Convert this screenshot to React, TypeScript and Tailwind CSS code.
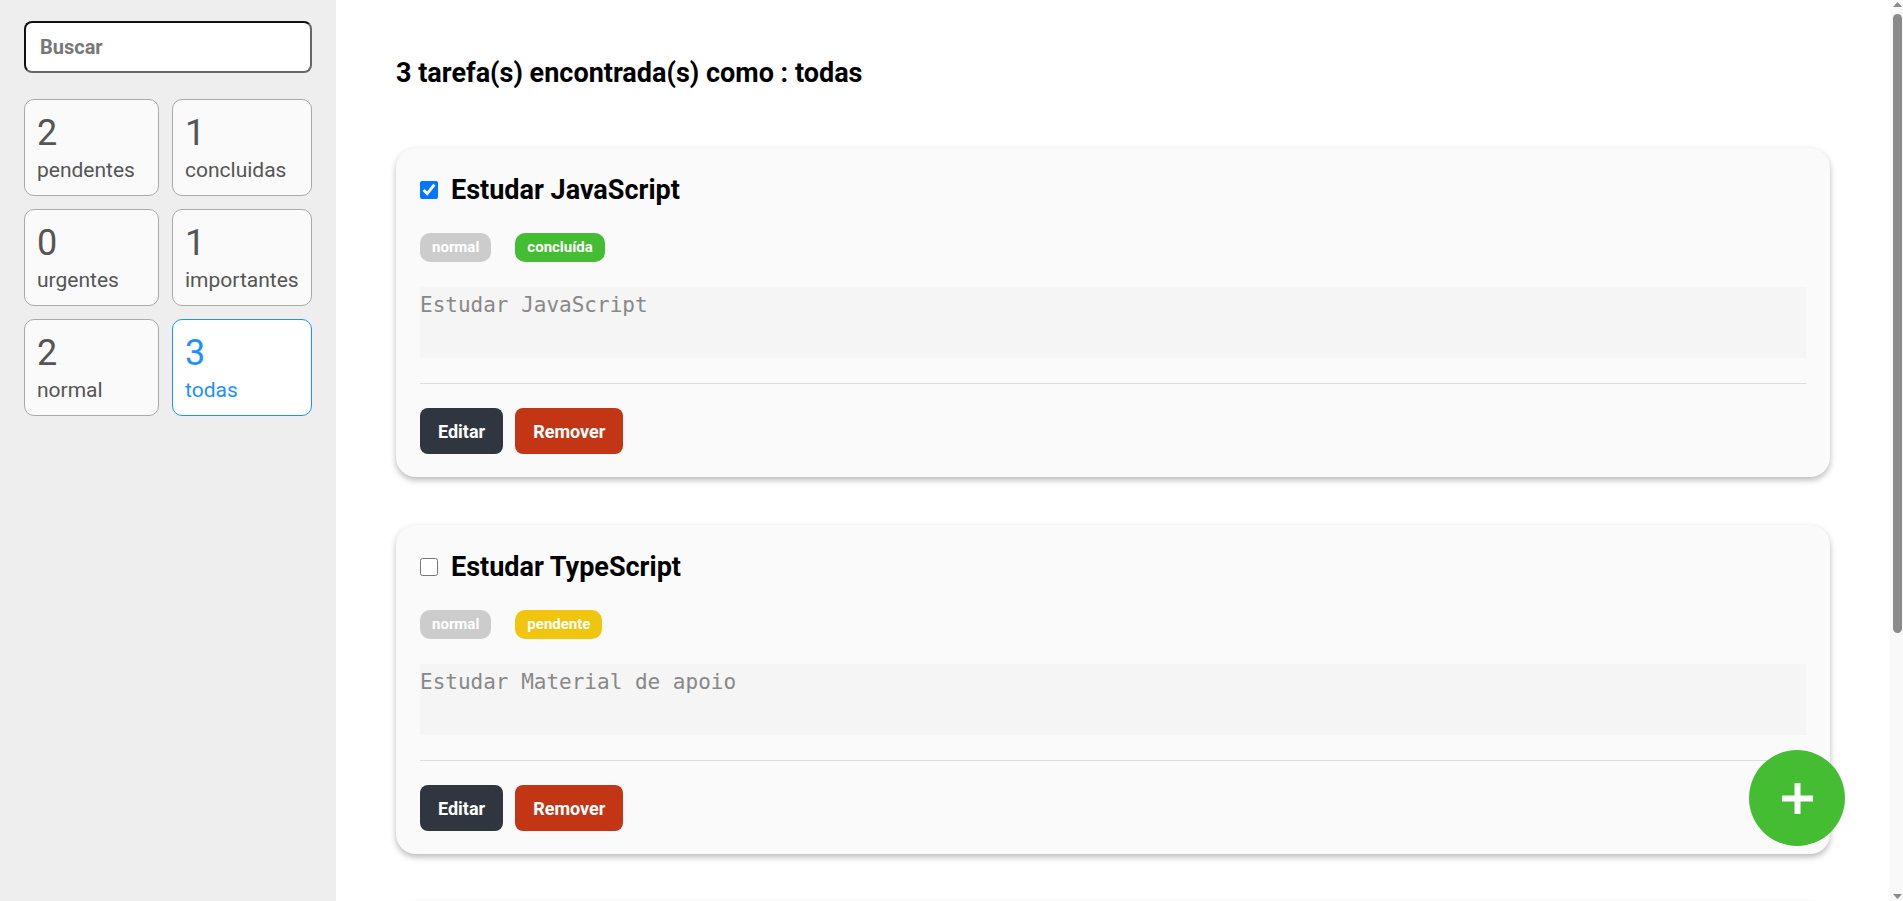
import React from "react";

type Task = {
  title: string;
  desc: string;
  done: boolean;
  priority: string;
  priorityClass: string;
};

const tasks: Task[] = [
  { title: "Estudar JavaScript", desc: "Estudar JavaScript", done: true, priority: "normal", priorityClass: "bg-[#cccccc]" },
  { title: "Estudar TypeScript", desc: "Estudar Material de apoio", done: false, priority: "normal", priorityClass: "bg-[#cccccc]" },
  { title: "Estudar React", desc: "Estudar componentes e hooks", done: false, priority: "importante", priorityClass: "bg-[#e1b12c]" },
];

const stats = [
  { n: "2", label: "pendentes", active: false },
  { n: "1", label: "concluidas", active: false },
  { n: "0", label: "urgentes", active: false },
  { n: "1", label: "importantes", active: false },
  { n: "2", label: "normal", active: false },
  { n: "3", label: "todas", active: true },
];

function StatCard({ n, label, active }: { n: string; label: string; active: boolean }) {
  return (
    <div
      className={
        active
          ? "rounded-[10px] border border-[#1e90ff] bg-white pt-[13px] pb-[13px] px-[12px] text-[#1e90ff]"
          : "rounded-[10px] border border-[#aaaaaa] bg-[#fafafa] pt-[13px] pb-[13px] px-[12px] text-[#555555]"
      }
    >
      <div className="text-[36px] leading-[40px]">{n}</div>
      <div className="mt-[5px] text-[21px] leading-[24px]">{label}</div>
    </div>
  );
}

function TaskCard({ t }: { t: Task }) {
  return (
    <div className="rounded-[20px] bg-[#fafafa] pt-[27px] pb-[23px] px-[24px] shadow-[0_3px_6px_rgba(0,0,0,0.28)]">
      <div className="flex h-[30px] items-center">
        <input
          type="checkbox"
          defaultChecked={t.done}
          className="m-0 h-[18px] w-[18px] shrink-0"
        />
        <h3 className="ml-[13px] text-[27px] font-bold leading-[30px] text-black">{t.title}</h3>
      </div>
      <div className="mt-[28px] flex gap-[24px]">
        <span className={`flex h-[29px] items-center rounded-[10px] px-[12px] text-[15px] font-bold text-white ${t.priorityClass}`}>
          {t.priority}
        </span>
        <span
          className={
            t.done
              ? "flex h-[29px] items-center rounded-[10px] px-[12px] text-[15px] font-bold text-white bg-[#44bd32]"
              : "flex h-[29px] items-center rounded-[10px] px-[12px] text-[15px] font-bold text-white bg-[#f1c40f]"
          }
        >
          {t.done ? "concluída" : "pendente"}
        </span>
      </div>
      <div className="mt-[25px] h-[71px] bg-[#f5f5f5] pt-[6px] font-['DejaVu_Sans_Mono',monospace] text-[21px] leading-[24px] text-[#888888]">
        {t.desc}
      </div>
      <div className="mt-[25px] h-px bg-[#dddddd]" />
      <div className="mt-[24px] flex gap-[12px]">
        <button className="h-[46px] rounded-[8px] bg-[#2f3640] px-[18px] text-[18px] font-bold text-white">Editar</button>
        <button className="h-[46px] rounded-[8px] bg-[#c23616] px-[18px] text-[18px] font-bold text-white">Remover</button>
      </div>
    </div>
  );
}

function Scrollbar() {
  return (
    <div className="flex w-[13px] shrink-0 flex-col bg-[#f9f9f9]">
      <div className="flex h-[14px] items-start justify-end pr-[1px] pt-[2px]">
        <svg width="9" height="5" viewBox="0 0 9 5">
          <polygon points="4.5,0 9,5 0,5" fill="#8a8a8a" />
        </svg>
      </div>
      <div className="ml-[3px] h-[619px] w-[9px] rounded-full bg-[#8a8a8a]" />
      <div className="flex-1" />
      <div className="flex h-[14px] items-end justify-end pr-[1px] pb-[2px]">
        <svg width="9" height="5" viewBox="0 0 9 5">
          <polygon points="0,0 9,0 4.5,5" fill="#8a8a8a" />
        </svg>
      </div>
    </div>
  );
}

export default function App() {
  return (
    <div className="flex h-screen overflow-hidden font-['Roboto',sans-serif]">
      <div className="min-w-0 flex-1 overflow-hidden">
        <div className="flex min-h-full">
          <aside className="w-[336px] shrink-0 bg-[#eeeeee] px-[24px] pt-[21px]">
            <input
              placeholder="Buscar"
              className="block h-[52px] w-full rounded-[8px] border-2 border-t-[#111111] border-l-[#111111] border-b-[#666666] border-r-[#666666] bg-white px-[14px] text-[20px] font-bold text-[#333] outline-none placeholder:text-[#777777]"
            />
            <div className="mt-[26px] grid grid-cols-[135px_140px] gap-[13px]">
              {stats.map((s) => (
                <StatCard key={s.label} {...s} />
              ))}
            </div>
          </aside>
          <main className="flex-1 bg-white px-[60px] pt-[57px] pb-[42px]">
            <h2 className="text-[27px] font-bold leading-[32px] text-black">3 tarefa(s) encontrada(s) como : todas</h2>
            <div className="mt-[59px] flex flex-col gap-[48px]">
              {tasks.map((t) => (
                <TaskCard key={t.title} t={t} />
              ))}
            </div>
          </main>
        </div>
      </div>
      <Scrollbar />
      <button className="fixed bottom-[55px] right-[58px] flex h-[96px] w-[96px] items-center justify-center rounded-full bg-[#44bd32]">
        <svg width="31" height="31" viewBox="0 0 31 31">
          <rect x="0" y="12.5" width="31" height="6" fill="white" />
          <rect x="12.5" y="0" width="6" height="31" fill="white" />
        </svg>
      </button>
    </div>
  );
}
